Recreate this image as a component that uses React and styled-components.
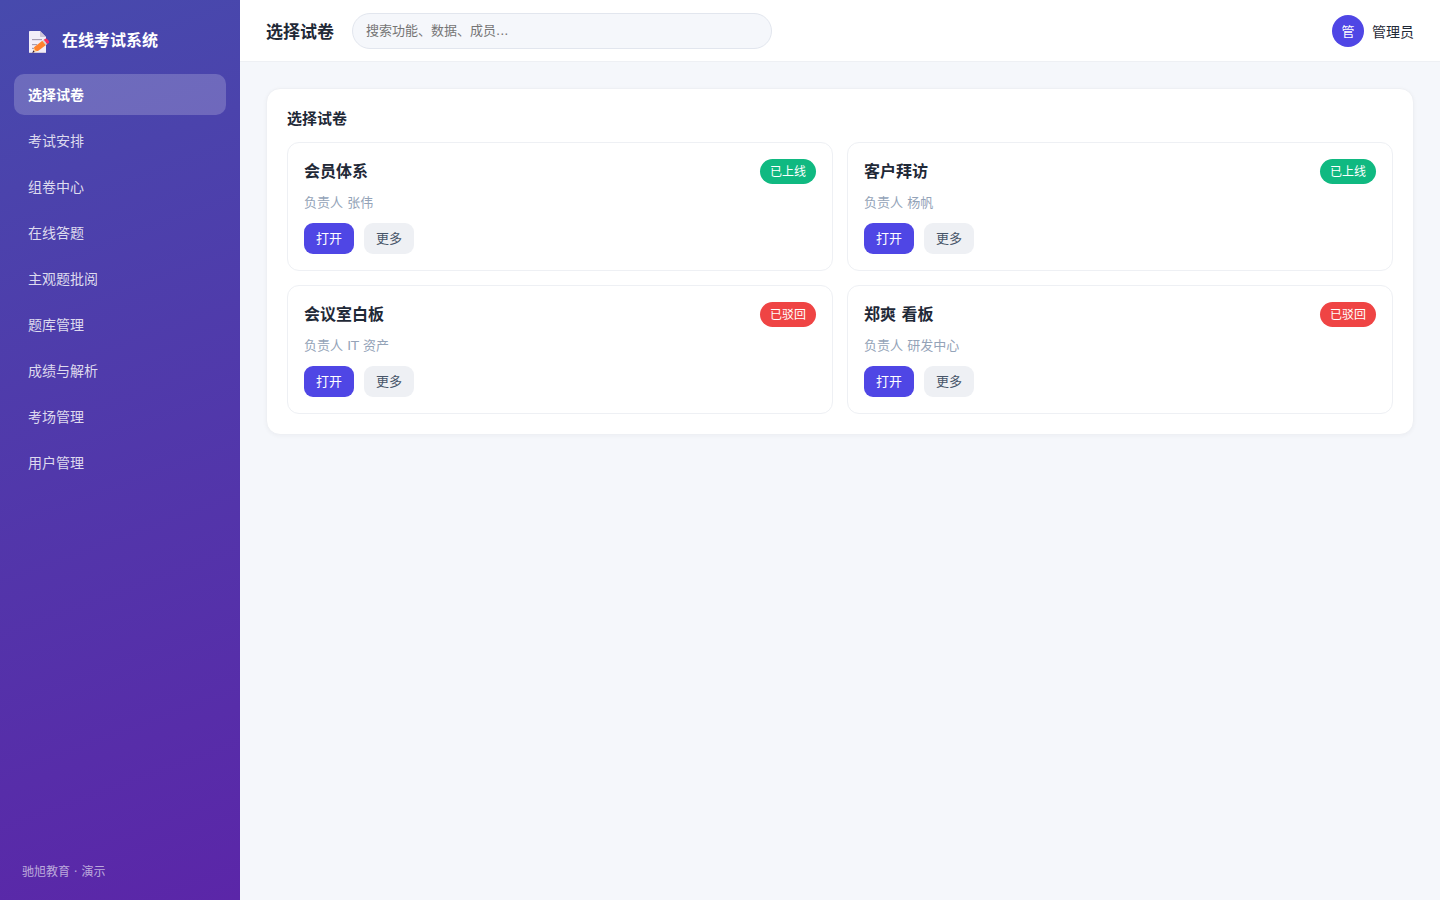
import { useState } from "react";
import styled, { createGlobalStyle } from "styled-components";

const menus = [
  "选择试卷",
  "考试安排",
  "组卷中心",
  "在线答题",
  "主观题批阅",
  "题库管理",
  "成绩与解析",
  "考场管理",
  "用户管理",
];

const papers = [
  { title: "会员体系", owner: "张伟", status: "已上线", color: "#10b981" },
  { title: "客户拜访", owner: "杨帆", status: "已上线", color: "#10b981" },
  { title: "会议室白板", owner: "IT 资产", status: "已驳回", color: "#ef4444" },
  { title: "郑爽 看板", owner: "研发中心", status: "已驳回", color: "#ef4444" },
];

function Logo() {
  return (
    <svg width="22" height="22" viewBox="0 0 66 66" aria-hidden="true">
      <path d="M3 2Q3 0 5 0H36L54 18V64Q54 66 52 66H5Q3 66 3 64Z" fill="#f3eef8" />
      <path d="M36 0L54 18H38Q36 18 36 16Z" fill="#cdc4d6" />
      <path d="M3 63H54V64Q54 66 52 66H5Q3 66 3 64Z" fill="#d3cadc" />
      <path d="M12 26H42M12 41H27M12 52H18" stroke="#998ea4" strokeWidth="3" />
      <path d="M14 65L19 48L29 60Z" fill="#ffd08a" />
      <path d="M13 66L16 58L20 63Z" fill="#321b41" />
      <path d="M18 49L43 29L54 42L30 60Q25 61 21 57Z" fill="#ff822d" />
      <path d="M43 29L47 26L58 39L54 42Z" fill="#d3d3d3" />
      <path d="M47 26L52 23Q55 21 58 25L63 31Q65 34 62 36L58 39Z" fill="#f92f60" />
    </svg>
  );
}

function App() {
  const [active, setActive] = useState(menus[0]);

  return (
    <Layout>
      <GlobalStyle />
      <Sidebar>
        <Brand>
          <Logo />
          <span>在线考试系统</span>
        </Brand>
        <Nav>
          {menus.map((menu) => (
            <NavItem
              key={menu}
              href="#"
              $active={menu === active}
              onClick={() => setActive(menu)}
            >
              {menu}
            </NavItem>
          ))}
        </Nav>
        <Copyright>驰旭教育 · 演示</Copyright>
      </Sidebar>
      <Main>
        <Topbar>
          <PageTitle>{active}</PageTitle>
          <Search
            type="search"
            placeholder="搜索功能、数据、成员..."
            aria-label="搜索"
          />
          <User>
            <Avatar>管</Avatar>
            <span>管理员</span>
          </User>
        </Topbar>
        <Content>
          <Panel>
            <PanelTitle>{active}</PanelTitle>
            <Grid>
              {papers.map((paper) => (
                <Card key={paper.title}>
                  <CardHeader>
                    <CardTitle>{paper.title}</CardTitle>
                    <Badge $color={paper.color}>{paper.status}</Badge>
                  </CardHeader>
                  <Owner>负责人 {paper.owner}</Owner>
                  <Actions>
                    <Button type="button" $primary>
                      打开
                    </Button>
                    <Button type="button">更多</Button>
                  </Actions>
                </Card>
              ))}
            </Grid>
          </Panel>
        </Content>
      </Main>
    </Layout>
  );
}

const GlobalStyle = createGlobalStyle`
  * {
    box-sizing: border-box;
  }
  body {
    margin: 0;
    background: #f5f7fb;
    color: #1f2937;
    font-family: "DejaVu Sans", "Noto Sans CJK SC", sans-serif;
    font-size: 14px;
  }
  h1, h2, h3, p {
    margin: 0;
  }
  button, input {
    font-family: inherit;
  }
`;

const Layout = styled.div`
  display: flex;
  min-height: 100vh;
`;

const Sidebar = styled.aside`
  display: flex;
  flex-direction: column;
  flex: 0 0 240px;
  padding: 31px 14px 18px;
  background: linear-gradient(160deg, #474aad, #5b26a8);
  color: white;
`;

const Brand = styled.div`
  display: flex;
  align-items: flex-start;
  gap: 12px;
  padding: 0 14px;
  margin-bottom: 21px;
  font-size: 16px;
  font-weight: 700;
  line-height: 19px;
`;

const Nav = styled.nav`
  display: flex;
  flex-direction: column;
  gap: 5px;
`;

const NavItem = styled.a`
  padding: 12px 14px 10px;
  border-radius: 10px;
  line-height: 19px;
  text-decoration: none;
  color: ${(props) => (props.$active ? "#fff" : "rgba(255, 255, 255, 0.82)")};
  font-weight: ${(props) => (props.$active ? 700 : 400)};
  background: ${(props) =>
    props.$active ? "rgba(255, 255, 255, 0.2)" : "transparent"};
`;

const Copyright = styled.div`
  margin-top: auto;
  padding: 0 8px;
  font-size: 12px;
  line-height: 20px;
  color: rgba(255, 255, 255, 0.6);
`;

const Main = styled.main`
  flex: 1;
  min-width: 0;
`;

const Topbar = styled.header`
  display: flex;
  align-items: center;
  gap: 18px;
  height: 62px;
  padding: 0 26px;
  background: white;
  border-bottom: 1px solid #eef0f4;
`;

const PageTitle = styled.h1`
  font-size: 17px;
  font-weight: 700;
  white-space: nowrap;
`;

const Search = styled.input`
  flex: 0 1 420px;
  min-width: 0;
  height: 36px;
  padding: 0 13px;
  border: 1px solid #e2e6ee;
  border-radius: 18px;
  background: #f5f7fb;
  font-size: 13px;
  outline: none;
  appearance: none;
  &::placeholder {
    color: #757575;
  }
`;

const User = styled.div`
  display: flex;
  align-items: center;
  gap: 8px;
  margin-left: auto;
  white-space: nowrap;
`;

const Avatar = styled.div`
  display: flex;
  align-items: center;
  justify-content: center;
  width: 32px;
  height: 32px;
  border-radius: 50%;
  background: #4f46e5;
  color: white;
  font-size: 13px;
`;

const Content = styled.div`
  padding: 26px;
`;

const Panel = styled.section`
  padding: 20px;
  border: 1px solid #eef0f4;
  border-radius: 14px;
  background: white;
  box-shadow: 0 1px 4px rgba(15, 23, 42, 0.04);
`;

const PanelTitle = styled.h2`
  margin-bottom: 12px;
  font-size: 15px;
  font-weight: 700;
  line-height: 21px;
`;

const Grid = styled.div`
  display: grid;
  grid-template-columns: repeat(2, minmax(0, 1fr));
  gap: 14px;
`;

const Card = styled.article`
  padding: 16px;
  border: 1px solid #eef0f4;
  border-radius: 12px;
`;

const CardHeader = styled.div`
  display: flex;
  align-items: flex-end;
  justify-content: space-between;
`;

const CardTitle = styled.h3`
  font-size: 16px;
  font-weight: 700;
  line-height: 24px;
`;

const Badge = styled.span`
  padding: 5px 10px 3px;
  border-radius: 20px;
  background: ${(props) => props.$color};
  color: white;
  font-size: 12px;
  line-height: 17px;
`;

const Owner = styled.p`
  margin: 9px 0 11px;
  font-size: 13px;
  line-height: 19px;
  color: #94a3b8;
`;

const Actions = styled.div`
  display: flex;
  gap: 10px;
`;

const Button = styled.button`
  padding: 6px 12px;
  border: none;
  border-radius: 9px;
  background: ${(props) => (props.$primary ? "#4f46e5" : "#eef0f4")};
  color: ${(props) => (props.$primary ? "#fff" : "#475569")};
  font-size: 13px;
  line-height: 19px;
  cursor: pointer;
`;

export default App;
